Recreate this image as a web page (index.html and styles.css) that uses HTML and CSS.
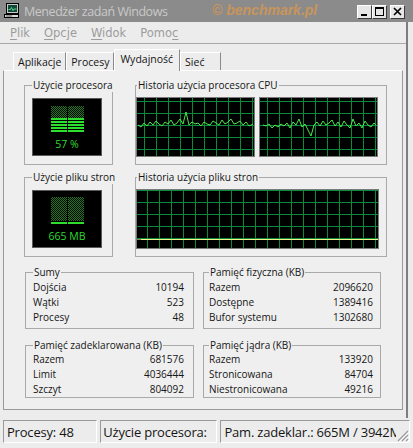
FILE: index.html
```html
<!DOCTYPE html>
<html lang="pl">
<head>
<meta charset="utf-8">
<title>Menedżer zadań Windows</title>
<link rel="stylesheet" href="styles.css">
</head>
<body>
<div class="window">
  <header class="titlebar">
    <svg class="app-icon" viewBox="0 0 16 16" width="16" height="16">
      <rect x="2.5" y="0.5" width="12" height="10" fill="#c8c8c8" stroke="#000"/>
      <rect x="4" y="2" width="9" height="7" fill="#0d4a3a"/>
      <path d="M4.5 6.5h2l1-2 1.5 3 1-1.5h2.5" fill="none" stroke="#7cf0a0" stroke-width="0.8"/>
      <rect x="0.5" y="11.5" width="14" height="3" fill="#d8d8d8" stroke="#000"/>
      <rect x="2" y="12.5" width="6" height="1" fill="#555"/>
    </svg>
    <span class="title">Menedżer zadań Windows</span>
    <span class="mark">© benchmark.pl</span>
    <div class="caption-buttons">
      <span class="cap"><svg viewBox="0 0 13 12" width="13" height="12"><rect x="3" y="8" width="6" height="2" fill="#000"/></svg></span>
      <span class="cap"><svg viewBox="0 0 13 12" width="13" height="12"><rect x="2.5" y="1.5" width="8" height="8" fill="none" stroke="#000"/><rect x="2" y="1" width="9" height="2" fill="#000"/></svg></span>
      <span class="cap cap-close"><svg viewBox="0 0 13 12" width="13" height="12"><path d="M3 2l7 7M10 2l-7 7" stroke="#000" stroke-width="1.6"/></svg></span>
    </div>
  </header>

  <div class="main">
    <nav class="menubar">
      <span class="menu-item"><u>P</u>lik</span>
      <span class="menu-item"><u>O</u>pcje</span>
      <span class="menu-item"><u>W</u>idok</span>
      <span class="menu-item">Pomo<u>c</u></span>
    </nav>

    <div class="tabs">
      <span class="tab">Aplikacje</span>
      <span class="tab">Procesy</span>
      <span class="tab tab-active">Wydajność</span>
      <span class="tab tab-wide">Sieć</span>
    </div>

    <section class="panel">
      <div class="grid-top">
        <fieldset class="group group-meter">
          <legend>Użycie procesora</legend>
          <div class="meter">
            <svg class="meter-bars" viewBox="0 0 70 36" width="70" height="36">
              <defs>
                <pattern id="dots" width="2" height="2" patternUnits="userSpaceOnUse">
                  <rect width="1" height="1" fill="#1f7a1f"/>
                  <rect x="1" y="1" width="1" height="1" fill="#1f7a1f"/>
                </pattern>
              </defs>
              <g>
                <rect x="19" y="7" width="16" height="12" fill="url(#dots)"/>
                <rect x="36" y="7" width="16" height="12" fill="url(#dots)"/>
              </g>
              <g fill="#2ee02e">
                <rect x="19" y="19" width="16" height="2"/><rect x="36" y="19" width="16" height="2"/>
                <rect x="19" y="22" width="16" height="2"/><rect x="36" y="22" width="16" height="2"/>
                <rect x="19" y="25" width="16" height="2"/><rect x="36" y="25" width="16" height="2"/>
                <rect x="19" y="28" width="16" height="2"/><rect x="36" y="28" width="16" height="2"/>
                <rect x="19" y="31" width="16" height="2"/><rect x="36" y="31" width="16" height="2"/>
              </g>
            </svg>
            <span class="meter-value">57 %</span>
          </div>
        </fieldset>

        <fieldset class="group group-history">
          <legend>Historia użycia procesora CPU</legend>
          <div class="graphs">
            <svg class="graph" viewBox="0 0 117 58" width="117" height="58">
              <defs>
                <pattern id="grid1" x="7" y="3" width="12" height="12" patternUnits="userSpaceOnUse">
                  <path d="M0 0.5H12M0.5 0V12" fill="none" stroke="#0b8a3c"/>
                </pattern>
              </defs>
              <rect width="117" height="58" fill="#000"/>
              <rect width="117" height="58" fill="url(#grid1)"/>
              <polyline fill="none" stroke="#4be84b" stroke-width="1"
                points="1,27 4,29 7,25 10,28 13,24 16,27 19,23 22,26 25,28 28,24 31,26 34,22 37,27 40,25 43,21 46,26 49,14 52,27 55,24 58,26 61,25 64,28 67,24 70,26 73,27 76,23 79,25 82,27 85,22 88,26 91,24 94,21 97,26 100,25 103,23 106,27 109,24 112,28 116,26"/>
            </svg>
            <svg class="graph" viewBox="0 0 117 58" width="117" height="58">
              <rect width="117" height="58" fill="#000"/>
              <rect width="117" height="58" fill="url(#grid1)"/>
              <polyline fill="none" stroke="#4be84b" stroke-width="1"
                points="3,27 6,28 9,26 12,30 15,27 18,29 21,26 24,28 27,25 30,30 33,24 36,27 39,21 42,29 45,26 48,32 51,38 54,27 57,24 60,28 63,23 66,27 69,25 72,22 75,28 78,24 81,29 84,23 87,27 90,30 93,21 96,28 99,25 102,30 105,23 108,27 111,29 114,25 116,27"/>
            </svg>
          </div>
        </fieldset>

        <fieldset class="group group-meter">
          <legend>Użycie pliku stron</legend>
          <div class="meter">
            <svg class="meter-bars" viewBox="0 0 70 36" width="70" height="36">
              <rect x="19" y="6" width="16" height="24" fill="url(#dots)"/>
              <rect x="36" y="6" width="16" height="24" fill="url(#dots)"/>
              <rect x="19" y="31" width="16" height="2" fill="#2ee02e"/>
              <rect x="36" y="31" width="16" height="2" fill="#2ee02e"/>
            </svg>
            <span class="meter-value">665 MB</span>
          </div>
        </fieldset>

        <fieldset class="group group-history">
          <legend>Historia użycia pliku stron</legend>
          <div class="graphs">
            <svg class="graph" viewBox="0 0 241 58" width="241" height="58">
              <defs>
                <pattern id="grid2" x="10" y="0" width="12" height="12" patternUnits="userSpaceOnUse">
                  <path d="M0 0.5H12M0.5 0V12" fill="none" stroke="#0b8a3c"/>
                </pattern>
              </defs>
              <rect width="241" height="58" fill="#000"/>
              <rect width="241" height="58" fill="url(#grid2)"/>
              <path d="M0 49.5H4" stroke="#8a8a6a"/>
              <path d="M4 49.5H241" stroke="#f4f48a"/>
            </svg>
          </div>
        </fieldset>
      </div>

      <div class="grid-bottom">
        <fieldset class="group group-stats group-left">
          <legend>Sumy</legend>
          <div class="stat"><span>Dojścia</span><span>10194</span></div>
          <div class="stat"><span>Wątki</span><span>523</span></div>
          <div class="stat"><span>Procesy</span><span>48</span></div>
        </fieldset>
        <fieldset class="group group-stats group-right">
          <legend>Pamięć fizyczna (KB)</legend>
          <div class="stat"><span>Razem</span><span>2096620</span></div>
          <div class="stat"><span>Dostępne</span><span>1389416</span></div>
          <div class="stat"><span>Bufor systemu</span><span>1302680</span></div>
        </fieldset>
        <fieldset class="group group-stats group-left group-short">
          <legend>Pamięć zadeklarowana (KB)</legend>
          <div class="stat"><span>Razem</span><span>681576</span></div>
          <div class="stat"><span>Limit</span><span>4036444</span></div>
          <div class="stat"><span>Szczyt</span><span>804092</span></div>
        </fieldset>
        <fieldset class="group group-stats group-right group-short">
          <legend>Pamięć jądra (KB)</legend>
          <div class="stat"><span>Razem</span><span>133920</span></div>
          <div class="stat"><span>Stronicowana</span><span>84704</span></div>
          <div class="stat"><span>Niestronicowana</span><span>49216</span></div>
        </fieldset>
      </div>
    </section>
  </div>

  <footer class="statusbar">
    <span class="status-cell cell-proc">Procesy: 48</span>
    <span class="status-cell cell-cpu">Użycie procesora:</span>
    <span class="status-cell cell-mem">
      <span class="status-text">Pam. zadeklar.: 665M / 3942M</span>
      <svg class="grip" viewBox="0 0 13 13" width="13" height="13">
        <path d="M12 2L2 12M12 6L6 12M12 10L10 12" stroke="#9a9a9a" stroke-width="1.2"/>
        <path d="M13 3L3 13M13 7L7 13M13 11L11 13" stroke="#fff" stroke-width="1"/>
      </svg>
    </span>
  </footer>
</div>
</body>
</html>
```

FILE: styles.css
```css
* {
  box-sizing: border-box;
}

html,
body {
  margin: 0;
  padding: 0;
}

body {
  width: 413px;
  height: 448px;
  overflow: hidden;
  background: #ececec;
  color: #151515;
  font-family: "Open Sans", "Noto Sans", sans-serif;
  font-size: 10px;
}

.window {
  display: flex;
  flex-direction: column;
  height: 448px;
  position: relative;
}

/* ---------- title bar ---------- */
.titlebar {
  flex: none;
  height: 22px;
  background: #8b8b8b;
  display: flex;
  align-items: center;
  padding-left: 4px;
  padding-right: 8px;
}

.app-icon {
  flex: none;
  margin-right: 4px;
}

.title {
  font-size: 12.5px;
  letter-spacing: -0.45px;
  color: #c9c9c9;
  white-space: nowrap;
}

/* watermark painted across the caption */
.mark {
  position: absolute;
  left: 212px;
  top: 2px;
  font: italic bold 14px "Liberation Sans", sans-serif;
  color: #c8955c;
  white-space: nowrap;
}

.caption-buttons {
  margin-left: auto;
  display: flex;
  align-items: center;
}

.cap {
  width: 15px;
  height: 14px;
  margin-top: 2px;
  background: #e6e6e6;
  border: 1px solid;
  border-color: #ffffff #3c3c3c #3c3c3c #ffffff;
  display: flex;
  align-items: center;
  justify-content: center;
}

.cap svg {
  display: block;
}

.cap-close {
  margin-left: 3px;
}

/* ---------- body of the window ---------- */
.main {
  flex: none;
  width: 408px;
  height: 396px;
  border-right: 2px solid #7e7e7e;
  display: flex;
  flex-direction: column;
}

.menubar {
  height: 22px;
  flex: none;
  border-bottom: 1px solid #a9a9a9;
  display: flex;
  align-items: center;
  padding-left: 3px;
  font-family: "DejaVu Sans", sans-serif;
  font-size: 11.5px;
  color: #9c9c9c;
}

.menu-item {
  padding: 0 7px;
  white-space: nowrap;
}

.menu-item u {
  text-decoration-thickness: 1px;
  text-underline-offset: 2px;
}

.tabs {
  flex: none;
  height: 26px;
  display: flex;
  align-items: flex-end;
  padding-left: 13px;
  font-size: 10.5px;
  position: relative;
  z-index: 1;
}

.tab {
  height: 18px;
  padding: 0 4px 0 4px;
  display: flex;
  align-items: center;
  border-top: 1px solid #ffffff;
  border-left: 1px solid #ffffff;
  border-right: 1px solid #8a8a8a;
  white-space: nowrap;
  background: #ececec;
}

.tab-active {
  height: 22px;
  margin-bottom: -1px;
  padding: 0 6px 3px 5px;
  background: #efefef;
}

.tab-wide {
  padding-right: 16px;
}

.panel {
  flex: none;
  margin-left: 3px;
  width: 400px;
  height: 340px;
  background: #efefef;
  border: 1px solid #9a9a9a;
  border-top-color: #ffffff;
  padding: 8px 0 11px 0;
  display: flex;
  flex-direction: column;
}

/* ---------- group boxes ---------- */
.group {
  margin: 0;
  min-width: 0;
  border: 1px solid #a9a9a9;
  padding: 0;
}

.group legend {
  padding: 0 1px;
  line-height: 13px;
  white-space: nowrap;
}

.grid-top {
  display: grid;
  grid-template-columns: 89px 252px;
  grid-auto-rows: 86px;
  column-gap: 22px;
  row-gap: 6px;
  padding-left: 20px;
}

.group-meter {
  padding: 6px 0 0 7px;
}

.meter {
  width: 70px;
  height: 58px;
  background: #000;
  border: 1px solid #5a5a5a;
  display: flex;
  flex-direction: column;
  align-items: center;
}

.meter-bars {
  display: block;
  margin-left: -1px;
}

.meter-value {
  margin-top: 3px;
  color: #2edc2e;
  font-size: 10.5px;
  line-height: 13px;
}

.group-history {
  padding: 6px 0 0 1px;
}

.graphs {
  display: flex;
  gap: 6px;
}

.graph {
  display: block;
  outline: 1px solid #7a7a7a;
}

.grid-bottom {
  margin-top: 9px;
  display: grid;
  grid-template-columns: 169px 178px;
  grid-template-rows: 63px 59px;
  column-gap: 9px;
  row-gap: 10px;
  padding-left: 21px;
}

.group-stats {
  padding: 1px 9px 0 7px;
}

.group-right {
  padding-left: 5px;
  padding-right: 7px;
}

.group-short {
  padding-top: 0;
}

.stat {
  display: flex;
  justify-content: space-between;
  line-height: 15px;
  white-space: nowrap;
}

/* ---------- status bar ---------- */
.statusbar {
  flex: none;
  height: 30px;
  display: flex;
  padding: 2px 3px 5px 3px;
  gap: 3px;
  font-size: 13px;
  letter-spacing: -0.2px;
}

.status-cell {
  height: 23px;
  border: 1px solid;
  border-color: #9a9a9a #ffffff #ffffff #9a9a9a;
  display: flex;
  align-items: center;
  padding-left: 3px;
  white-space: nowrap;
  overflow: hidden;
}

.cell-proc {
  width: 95px;
}

.cell-cpu {
  width: 118px;
  padding-left: 2px;
}

.cell-mem {
  width: 191px;
  padding-right: 0;
}

.status-text {
  flex: 1;
  overflow: hidden;
  white-space: nowrap;
}

.grip {
  flex: none;
  align-self: flex-end;
  display: block;
}
```
